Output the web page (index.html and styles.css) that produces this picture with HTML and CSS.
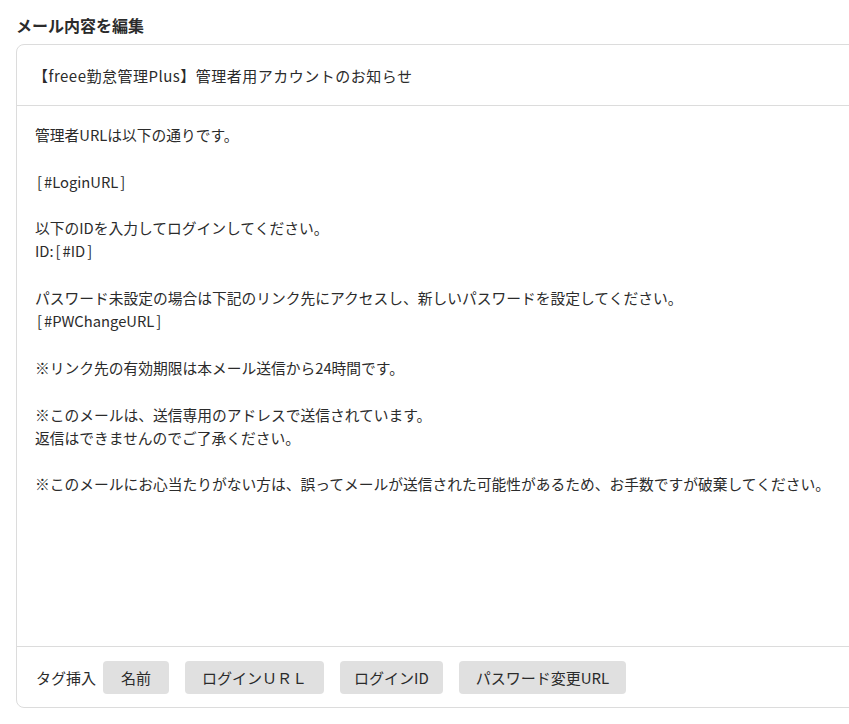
FILE: index.html
```html
<!DOCTYPE html>
<html lang="ja">
<head>
<meta charset="utf-8">
<title>メール内容を編集</title>
<link rel="stylesheet" href="styles.css">
</head>
<body>
<div class="page">
  <h2 class="page-title">メール内容を編集</h2>
  <div class="card">
    <div class="subject">【freee勤怠管理Plus】管理者用アカウントのお知らせ</div>
    <div class="body-text">
      <div class="line">管理者URLは以下の通りです。</div>
      <div class="line blank"></div>
      <div class="line"><span class="br">[</span>#LoginURL<span class="br">]</span></div>
      <div class="line blank"></div>
      <div class="line">以下のIDを入力してログインしてください。</div>
      <div class="line">ID:<span class="br">[</span>#ID<span class="br">]</span></div>
      <div class="line blank"></div>
      <div class="line">パスワード未設定の場合は下記のリンク先にアクセスし、新しいパスワードを設定してください。</div>
      <div class="line"><span class="br">[</span>#PWChangeURL<span class="br">]</span></div>
      <div class="line blank"></div>
      <div class="line">※リンク先の有効期限は本メール送信から24時間です。</div>
      <div class="line blank"></div>
      <div class="line">※このメールは、送信専用のアドレスで送信されています。</div>
      <div class="line">返信はできませんのでご了承ください。</div>
      <div class="line blank"></div>
      <div class="line">※このメールにお心当たりがない方は、誤ってメールが送信された可能性があるため、お手数ですが破棄してください。</div>
    </div>
    <div class="footer">
      <span class="tag-label">タグ挿入</span>
      <button class="tag-btn first">名前</button>
      <button class="tag-btn">ログインＵＲＬ</button>
      <button class="tag-btn narrow">ログインID</button>
      <button class="tag-btn">パスワード変更URL</button>
    </div>
  </div>
</div>
</body>
</html>
```
FILE: styles.css
```css
html, body {
  margin: 0;
  padding: 0;
  background: #fff;
  overflow: hidden;
}
body {
  font-family: "Noto Sans CJK JP", "Noto Sans", sans-serif;
  color: #2b2b2b;
}
.page {
  padding: 13px 0 0 16px;
}
.page-title {
  margin: 0 0 7px 0;
  font-size: 16px;
  font-weight: 700;
  line-height: 24px;
  color: #2b2b2b;
}
.card {
  width: 860px;
  border: 1px solid #dcdcdc;
  border-radius: 8px;
  background: #fff;
}
.subject {
  height: 60px;
  display: flex;
  align-items: center;
  padding: 0 18px 0 16px;
  font-size: 15px;
  letter-spacing: 0.5px;
  border-bottom: 1px solid #dcdcdc;
}
.body-text {
  height: 540px;
  padding: 17px 18px 0 18px;
  box-sizing: border-box;
  font-size: 14.75px;
  line-height: 23.3px;
}
.br {
  margin: 0 2px;
}
.line.blank {
  height: 23.3px;
}
.footer {
  height: 60px;
  border-top: 1px solid #dcdcdc;
  display: flex;
  align-items: center;
  padding: 0 19px;
  font-size: 15px;
}
.tag-label {
  margin-right: 7px;
}
.tag-btn {
  font-family: inherit;
  font-size: 15px;
  color: #2b2b2b;
  background: #e0e0e0;
  border: none;
  border-radius: 4px;
  height: 33px;
  padding: 0 17px;
  margin-left: 16px;
}
.tag-btn.first {
  margin-left: 0;
  padding: 0 18px;
}
.tag-btn.narrow {
  padding: 0 14px;
}
```
